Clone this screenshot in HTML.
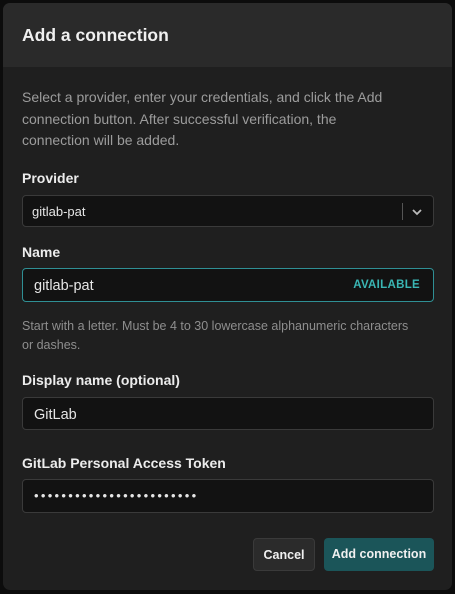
<!DOCTYPE html>
<html><head><style>
*{box-sizing:border-box;margin:0;padding:0}
body{width:455px;height:594px;background:#0c0c0c;font-family:"Liberation Sans",sans-serif;position:relative;overflow:hidden}
.dlg{position:absolute;left:3px;top:3px;width:449px;height:587px;background:#1f1f1f;border-radius:7px;overflow:hidden}
.hd{height:64px;background:#2a2a2a;padding:22px 0 0 19px;color:#f0f0f0;font-size:17.5px;font-weight:bold}
.a{position:absolute}
.desc{left:19px;top:84px;width:420px;color:#9c9c9c;font-size:14px;line-height:21.5px;white-space:nowrap}
.lbl{left:19px;color:#ececec;font-size:14px;font-weight:bold}
.box{left:19px;width:412px;background:#121212;border:1px solid #3a3a3a;border-radius:4px;color:#e6e6e6}
.help{left:19px;width:420px;color:#8e8e8e;font-size:12.5px;line-height:19px;white-space:nowrap}
.btn{top:535px;height:33px;border-radius:4px;font-size:12.5px;font-weight:bold;color:#f0f0f0;text-align:center;line-height:33px}
</style></head><body>
<div class="dlg">
<div class="hd">Add a connection</div>
<div class="a desc">Select a provider, enter your credentials, and click the Add<br>connection button. After successful verification, the<br>connection will be added.</div>
<div class="a lbl" style="top:167px">Provider</div>
<div class="a box" style="top:192px;height:32px;font-size:13px;padding:8px 0 0 9px">gitlab-pat
<div class="a" style="left:379px;top:7px;width:1px;height:17px;background:#555"></div>
<svg class="a" style="left:387px;top:9px" width="14" height="14" viewBox="0 0 14 14"><path d="M3 5l4 4 4-4" stroke="#bbb" stroke-width="1.8" fill="none"/></svg>
</div>
<div class="a lbl" style="top:241px">Name</div>
<div class="a box" style="top:265px;height:34px;border-color:#2f8f94;font-size:14.5px;padding:9px 0 0 11px">gitlab-pat
<span class="a" style="right:13px;top:10px;color:#3ab6b4;font-size:11.5px;font-weight:bold;letter-spacing:.3px">AVAILABLE</span></div>
<div class="a help" style="top:314px">Start with a letter. Must be 4 to 30 lowercase alphanumeric characters<br>or dashes.</div>
<div class="a lbl" style="top:369px">Display name (optional)</div>
<div class="a box" style="top:394px;height:33px;font-size:14.5px;padding:9px 0 0 11px">GitLab</div>
<div class="a lbl" style="top:452px">GitLab Personal Access Token</div>
<div class="a box" style="top:476px;height:34px;font-size:13px;padding:8px 0 0 11px;letter-spacing:2.3px">••••••••••••••••••••••••</div>
<div class="a btn" style="left:250px;width:62px;background:#2b2b2b;border:1px solid #3a3a3a">Cancel</div>
<div class="a btn" style="left:321px;width:110px;background:#1b5559">Add connection</div>
</div>
</body></html>
